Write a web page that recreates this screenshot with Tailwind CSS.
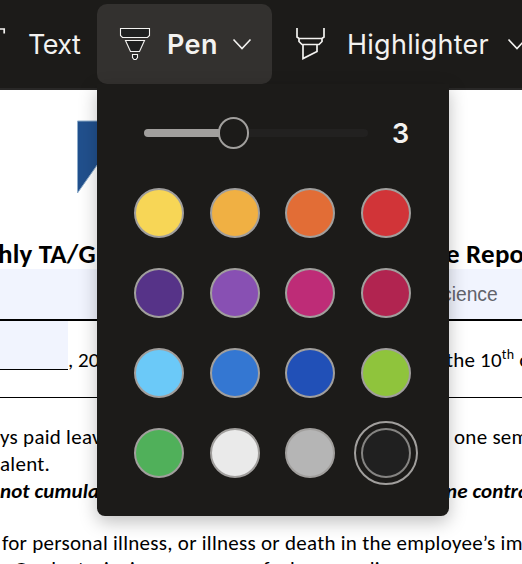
<!DOCTYPE html>
<html lang="en">
<head>
<meta charset="utf-8">
<title>Document markup</title>
<script src="https://cdn.jsdelivr.net/npm/@tailwindcss/browser@4"></script>
</head>
<body class="relative w-[522px] h-[564px] overflow-hidden bg-white font-['Inter',sans-serif]">
<header class="h-[90px] bg-[#1c1b19] border-b-2 border-[#292827] flex items-start pt-1 overflow-hidden text-[#f3f2f0]">
  <div class="w-[97px] h-20 shrink-0 flex items-center">
    <svg class="w-7 h-10 shrink-0" viewBox="0 0 28 40" fill="none" stroke="#f3f2f0" stroke-width="1.700"><path d="M-14 9V5H4.200V9.500"/></svg>
    <span class="pt-0.5 text-[27px] tracking-[-0.6px]">Text</span>
  </div>
  <div class="w-[175px] h-20 shrink-0 rounded-[10px] bg-[#33312f] flex items-center">
    <svg class="w-[38px] h-10 ml-[18px] shrink-0" viewBox="0 0 38 40" fill="#1f2020" stroke="#f3f2f0" stroke-width="1.1"><path d="M5.500 4.500h29v7l-2 2h-25l-2-2zM10.500 16.500h19l-5 11h-9zM17.500 30.500h5v3l-1.500 2h-2l-1.500-2z"/></svg>
    <span class="ml-[14px] w-[51px] pt-0.5 text-[27px] font-semibold tracking-[0.4px]">Pen</span>
    <svg class="w-5 h-3 ml-[14px] shrink-0" viewBox="0 0 20 12" fill="none" stroke="#f3f2f0" stroke-width="1.6"><path d="M1.500 1.500l8.500 9 8.500-9"/></svg>
  </div>
  <div class="h-20 shrink-0 flex items-center">
    <svg class="w-[30px] h-10 ml-[23px] shrink-0" viewBox="0 0 30 40" fill="none" stroke="#f3f2f0" stroke-width="1.7"><path d="M2 4v9l2 1.500h23l2-1.500V4M4 14.500v3l3 3h17l3-3v-3M8 20.500v14l14-7v-7"/></svg>
    <span class="ml-[22px] w-[143px] pt-0.5 text-[27px] tracking-[0.25px]">Highlighter</span>
    <svg class="w-5 h-3 ml-[17px] shrink-0" viewBox="0 0 20 12" fill="none" stroke="#f3f2f0" stroke-width="1.6"><path d="M1.500 1.500l8.500 9 8.500-9"/></svg>
  </div>
</header>

<main class="h-[474px] overflow-hidden text-black whitespace-nowrap font-['Carlito','Lato',sans-serif]">
  <div class="h-[149px] pt-[30px] pl-[77px]">
    <svg class="w-[30px] h-[75px]" viewBox="0 0 30 75"><path d="M.5 1H30V31L.5 73z" fill="#21508d" stroke="#8eacca" stroke-width="1"/></svg>
  </div>
  <div class="h-[30px] flex text-[27px] leading-[30px] font-bold tracking-[0.2px]">
    <span class="w-[448px] -ml-[2px] shrink-0">hly TA/G</span><span>e Report</span>
  </div>
  <div class="h-[52px] bg-[#f1f4fe] border-b-2 border-black flex items-center font-['Liberation_Sans',sans-serif] text-[19.300px] text-[#62636b]">
    <span class="ml-[442px] pt-0.5">cience</span>
  </div>
  <div class="h-[49px] flex text-[21px] leading-[28px]">
    <span class="w-[68px] shrink-0 bg-[#f1f4fe] border-b border-black"></span>
    <span class="w-[378px] shrink-0 pt-[25px]">, 20</span>
    <span class="pt-[25px] tracking-[0.2px]">the 10<sup class="text-[14px] leading-none -top-[8px]">th</sup> of</span>
  </div>
  <div class="h-[28px] border-b border-black"></div>
  <div class="pt-[26px] text-[21px] leading-[27px] tracking-[0.27px]">
    <div class="flex"><span class="w-[454px] shrink-0">ys paid leave</span><span>one semester</span></div>
    <div>alent.</div>
    <div class="flex font-bold italic tracking-[0.1px]"><span class="w-[446px] shrink-0">not cumulative</span><span>ne contract</span></div>
    <div class="pt-[25px] pl-[2px]">for personal illness, or illness or death in the employee’s im</div>
    <div class="flex pl-[14px] leading-[25px]"><span class="w-[90px] shrink-0">Graduate</span><span class="w-[26px]">is</span><span class="w-[133px]">in</span><span class="w-[27px]">for</span><span class="w-[57px]">been</span><span>policy</span></div>
  </div>
</main>

<section class="absolute left-[97px] top-[84px] w-[352px] h-[432px] rounded-b-lg bg-[#1c1b19] shadow-[0_6px_18px_rgba(0,0,0,0.25)]">
  <div class="h-[98px] pl-[47px] flex items-center text-[#f3f2f0]">
    <div class="w-[224px] h-2 rounded-full bg-[#222120] flex items-center">
      <div class="w-[82px] h-2 rounded-l-full bg-[#a19f9d]"></div>
      <div class="-ml-2 w-[31px] h-8 rounded-full bg-[#1c1b19] border-2 border-[#a19f9d]"></div>
    </div>
    <span class="ml-6 pt-0.5 text-[27px] font-semibold">3</span>
  </div>
  <div class="grid grid-cols-[50px_50px_50px_50px] gap-x-[25.670px] gap-y-[30px] pl-[37px] pt-[6px]">
    <i class="size-[50px] rounded-full border-2 border-[#a19f9d] bg-[#f7d656]"></i>
    <i class="size-[50px] rounded-full border-2 border-[#a19f9d] bg-[#f0b043]"></i>
    <i class="size-[50px] rounded-full border-2 border-[#a19f9d] bg-[#e26d36]"></i>
    <i class="size-[50px] rounded-full border-2 border-[#a19f9d] bg-[#d13438]"></i>
    <i class="size-[50px] rounded-full border-2 border-[#a19f9d] bg-[#563388]"></i>
    <i class="size-[50px] rounded-full border-2 border-[#a19f9d] bg-[#8850b3]"></i>
    <i class="size-[50px] rounded-full border-2 border-[#a19f9d] bg-[#be2c77]"></i>
    <i class="size-[50px] rounded-full border-2 border-[#a19f9d] bg-[#b12450]"></i>
    <i class="size-[50px] rounded-full border-2 border-[#a19f9d] bg-[#6bc9f8]"></i>
    <i class="size-[50px] rounded-full border-2 border-[#a19f9d] bg-[#3477d2]"></i>
    <i class="size-[50px] rounded-full border-2 border-[#a19f9d] bg-[#2150b7]"></i>
    <i class="size-[50px] rounded-full border-2 border-[#a19f9d] bg-[#8fc43c]"></i>
    <i class="size-[50px] rounded-full border-2 border-[#a19f9d] bg-[#50b05a]"></i>
    <i class="size-[50px] rounded-full border-2 border-[#a19f9d] bg-[#eaeaea]"></i>
    <i class="size-[50px] rounded-full border-2 border-[#a19f9d] bg-[#b5b5b5]"></i>
    <i class="-m-[7px] size-16 rounded-full border-2 border-[#a19f9d] p-[5px]"><b class="block size-[50px] rounded-full border-2 border-[#858482] bg-[#202020]"></b></i>
  </div>
</section>
</body>
</html>
